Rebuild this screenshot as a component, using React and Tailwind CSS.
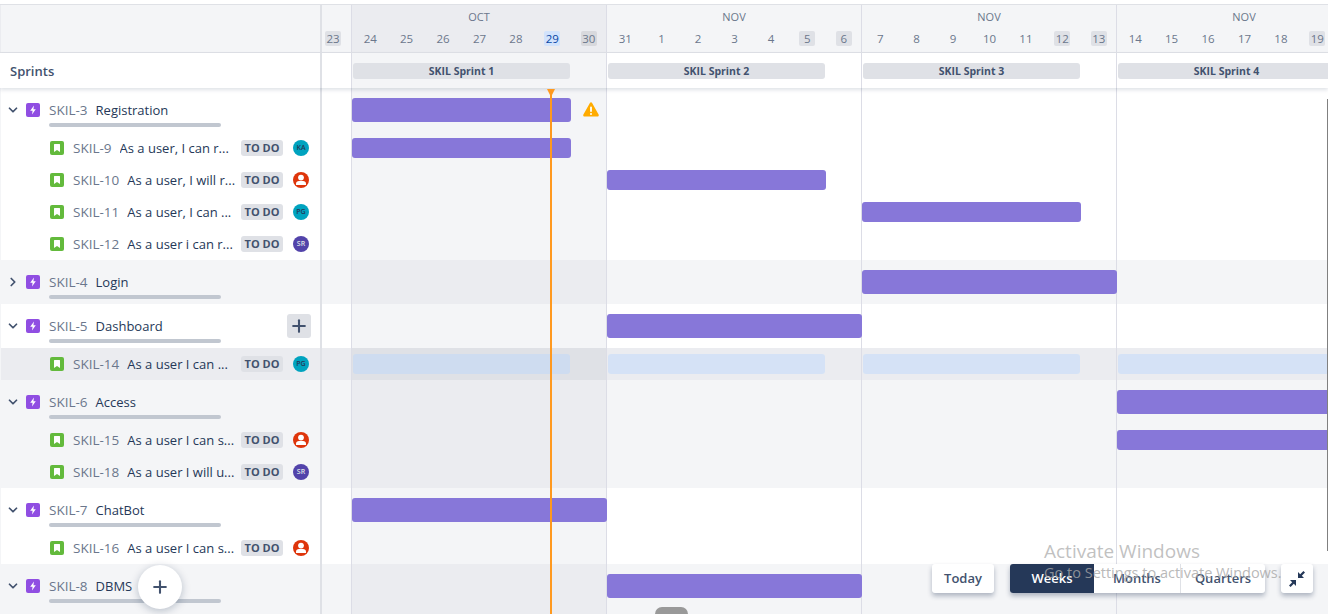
import React from 'react';
import { ChevronDown, ChevronRight, Plus } from 'lucide-react';

const fontClass = "font-['Open_Sans','Noto_Sans',sans-serif]";

const weeks = [
  { month: 'OCT', days: [24, 25, 26, 27, 28, 29, 30], sprint: 'SKIL Sprint 1', shaded: true },
  { month: 'NOV', days: [31, 1, 2, 3, 4, 5, 6], sprint: 'SKIL Sprint 2' },
  { month: 'NOV', days: [7, 8, 9, 10, 11, 12, 13], sprint: 'SKIL Sprint 3' },
  { month: 'NOV', days: [14, 15, 16, 17, 18, 19, 20], sprint: 'SKIL Sprint 4' },
];

const weekend = [23, 5, 6, 12, 13, 19, 20, 30];

const rows = [
  { kind: 'epic', id: 'SKIL-3', title: 'Registration', open: true, bar: { week: 0, short: true } },
  { kind: 'story', id: 'SKIL-9', title: 'As a user, I can r...', avatar: 'KA', bar: { week: 0, short: true } },
  { kind: 'story', id: 'SKIL-10', title: 'As a user, I will r...', avatar: 'user', bar: { week: 1, short: true } },
  { kind: 'story', id: 'SKIL-11', title: 'As a user, I can ...', avatar: 'PG', bar: { week: 2, short: true } },
  { kind: 'story', id: 'SKIL-12', title: 'As a user i can r...', avatar: 'SR' },
  { kind: 'epic', id: 'SKIL-4', title: 'Login', grey: true, bar: { week: 2 } },
  { kind: 'epic', id: 'SKIL-5', title: 'Dashboard', open: true, add: true, bar: { week: 1 } },
  { kind: 'story', id: 'SKIL-14', title: 'As a user I can ...', avatar: 'PG', selected: true },
  { kind: 'epic', id: 'SKIL-6', title: 'Access', open: true, grey: true, bar: { week: 3 } },
  { kind: 'story', id: 'SKIL-15', title: 'As a user I can s...', avatar: 'user', grey: true, bar: { week: 3 } },
  { kind: 'story', id: 'SKIL-18', title: 'As a user I will u...', avatar: 'SR', grey: true },
  { kind: 'epic', id: 'SKIL-7', title: 'ChatBot', open: true, bar: { week: 0 } },
  { kind: 'story', id: 'SKIL-16', title: 'As a user I can s...', avatar: 'user' },
  { kind: 'epic', id: 'SKIL-8', title: 'DBMS', open: true, grey: true, bar: { week: 1 } },
  { kind: 'filler', id: 'end', grey: true },
];

const rowHeight = { epic: 'h-11', story: 'h-8', filler: 'h-1.5' };

const EpicIcon = () => (
  <svg viewBox="0 0 14 14" className="w-3.5 h-3.5 shrink-0">
    <rect width="14" height="14" rx="2" fill="#904ee2" />
    <path d="M8 2.500 4.200 7.700h2.400l-.6 3.800 3.800-5.200H7.400z" fill="#fff" />
  </svg>
);

const StoryIcon = () => (
  <svg viewBox="0 0 14 14" className="w-3.5 h-3.5 shrink-0">
    <rect width="14" height="14" rx="2" fill="#63ba3c" />
    <path d="M4.500 3h5a.5.5 0 0 1 .5.5V11L7 8.900 4 11V3.500a.5.5 0 0 1 .5-.5z" fill="#fff" />
  </svg>
);

const Avatar = ({ who }) => {
  if (who === 'user') {
    return (
      <svg viewBox="0 0 16 16" className="w-4 h-4 shrink-0">
        <circle cx="8" cy="8" r="8" fill="#de350b" />
        <circle cx="8" cy="5.600" r="2.900" fill="#fff" />
        <path d="M3 13v-1.400C3 9.900 4.300 9 6 9h4c1.700 0 3 .9 3 2.600V13z" fill="#fff" />
      </svg>
    );
  }
  const bg = who === 'SR' ? 'bg-[#5243aa] text-[#dfe1e6]' : 'bg-[#00a3bf] text-[#253858]';
  return (
    <div className={`w-4 h-4 shrink-0 rounded-full flex items-center justify-center text-[7px] font-semibold ${bg}`}>
      {who}
    </div>
  );
};

const Epic = ({ row }) => (
  <div className="h-11 pt-3 pl-[5px] pr-[9px]">
    <div className="flex items-center h-5">
      <div className="w-5 shrink-0 text-[#42526e]">
        {row.open ? <ChevronDown size={14} strokeWidth={3} /> : <ChevronRight size={14} strokeWidth={3} />}
      </div>
      <EpicIcon />
      <span className="ml-[9px] mt-px text-[13.5px] text-[#6b778c]">{row.id}</span>
      <span className="ml-2 mt-0.5 text-[#253858]">{row.title}</span>
      {row.add && (
        <div className="ml-auto w-6 h-6 shrink-0 rounded-[3px] bg-[#dfe1e6] flex items-center justify-center text-[#42526e]">
          <Plus size={20} strokeWidth={2.5} />
        </div>
      )}
    </div>
    <div className="mt-[3px] ml-[43px] w-[172px] h-1 rounded-sm bg-[#c1c7d0]" />
  </div>
);

const Story = ({ row }) => (
  <div className="h-8 flex items-center pl-[49px] pr-[11px]">
    <StoryIcon />
    <span className="ml-[9px] mt-px text-[13.5px] text-[#6b778c] shrink-0">{row.id}</span>
    <span className="ml-2 mt-0.5 text-[#253858] whitespace-nowrap overflow-hidden flex-1">{row.title}</span>
    <span className="ml-0.5 w-[42px] h-4 shrink-0 rounded-[3px] bg-[#dfe1e6] text-[#42526e] text-[11px] font-bold leading-4 text-center">
      TO DO
    </span>
    <div className="ml-2.5">
      <Avatar who={row.avatar} />
    </div>
  </div>
);

const DayLabel = ({ day }) => {
  let badge = 'text-[#6b778c]';
  if (day === 29) badge = 'bg-[#d2e3fc] text-[#0747a6]';
  else if (day === 30) badge = 'bg-[#d8d9dd] text-[#6b778c]';
  else if (weekend.includes(day)) badge = 'bg-[#dfe1e6] text-[#6b778c]';
  return (
    <div className="flex justify-center">
      <span className={`w-4 h-[15px] rounded-[2px] text-[11.5px] leading-[15px] text-center ${badge}`}>{day}</span>
    </div>
  );
};

const TimelineRow = ({ row }) => {
  const base = row.selected ? 'bg-[#ebecf0]' : row.grey ? 'bg-[#f4f5f7]' : 'bg-white';
  const shaded = row.selected ? 'bg-[#dfe1e6]' : row.grey ? 'bg-[#ebecf0]' : 'bg-[#f4f5f7]';
  return (
    <div className={`flex flex-1 ${base}`}>
      <div className="w-[29px] shrink-0" />
      {weeks.map((w, i) => (
        <div
          key={i}
          className={`w-[255px] shrink-0 border-l border-[#dcdde6] flex items-center ${w.shaded ? shaded : ''}`}
        >
          {row.selected && <div className="ml-px w-[217px] h-5 rounded-[3px] bg-[#b3d4ff]/40 shrink-0" />}
          {row.bar && row.bar.week === i && (
            <div
              className={`relative rounded-[3px] bg-[#8777d9] shrink-0 ${row.bar.short ? 'w-[219px]' : 'w-[255px]'} ${row.kind === 'epic' ? 'h-6' : 'h-5'}`}
            />
          )}
        </div>
      ))}
    </div>
  );
};

export default function App() {
  return (
    <div className={`${fontClass} relative w-[1328px] h-[614px] overflow-hidden bg-white text-[13px] pt-1`}>
      {/* Header */}
      <div className="flex h-[49px] border-t border-b border-[#dfe1e6] bg-[#f4f5f7]">
        <div className="w-[320px] shrink-0 border-l border-[#ebecf0]" />
        <div className="w-0.5 shrink-0 bg-[#dfe1e6]" />
        <div className="w-[29px] shrink-0 pt-[26px] pr-[7px] flex justify-center">
          <DayLabel day={23} />
        </div>
        {weeks.map((w, i) => (
          <div key={i} className={`w-[255px] shrink-0 border-l border-[#dcdde6] ${w.shaded ? 'bg-[#ebecf0]' : ''}`}>
            <div className="h-[26px] pt-[4px] text-center text-[11px] leading-4 text-[#6b778c]">{w.month}</div>
            <div className="grid grid-cols-7 -mr-px">
              {w.days.map((d) => (
                <DayLabel key={d} day={d} />
              ))}
            </div>
          </div>
        ))}
      </div>

      {/* Sprints */}
      <div className="relative z-10 flex h-[35px] bg-white shadow-[0_2px_4px_rgba(9,30,66,0.13)]">
        <div className="w-[320px] shrink-0 flex items-center pl-2.5 pt-0.5 font-semibold text-[#42526e]">Sprints</div>
        <div className="w-0.5 shrink-0 bg-[#dfe1e6]" />
        <div className="w-[29px] shrink-0" />
        {weeks.map((w, i) => (
          <div
            key={i}
            className={`w-[255px] shrink-0 border-l border-[#dcdde6] flex items-center pl-px ${w.shaded ? 'bg-[#f4f5f7]' : ''}`}
          >
            <div className="w-[217px] h-4 rounded-[3px] bg-[#dfe1e6] text-[10.5px] font-bold leading-4 text-center text-[#42526e]">
              {w.sprint}
            </div>
          </div>
        ))}
      </div>

      {/* Rows */}
      {rows.map((row) => (
        <div key={row.id} className={`flex ${rowHeight[row.kind]}`}>
          <div
            className={`w-[320px] shrink-0 border-l border-[#f4f5f7] ${row.selected ? 'bg-[#ebecf0]' : row.grey ? 'bg-[#f4f5f7]' : 'bg-white'}`}
          >
            {row.kind === 'epic' && <Epic row={row} />}
            {row.kind === 'story' && <Story row={row} />}
          </div>
          <div className="w-0.5 shrink-0 bg-[#dfe1e6]" />
          <TimelineRow row={row} />
        </div>
      ))}

      {/* Today line */}
      <div className="absolute z-20 left-[550px] top-[89px] bottom-0 w-0.5 bg-[#ff991f]" />
      <div className="absolute z-20 left-[547px] top-[89px] w-0 h-0 border-x-4 border-t-[8px] border-x-transparent border-t-[#ff991f]" />

      {/* Warning */}
      <svg viewBox="0 0 16 15" className="absolute z-20 left-[583px] top-[102px] w-4 h-[15px]">
        <path d="M6.900 1 .4 12.600c-.5.9.1 2 1.100 2h13c1 0 1.600-1.100 1.100-2L9.100 1c-.5-.9-1.700-.9-2.200 0z" fill="#ffab00" />
        <rect x="7.100" y="4.500" width="1.800" height="5.500" rx=".9" fill="#fff" />
        <circle cx="8" cy="12" r="1" fill="#fff" />
      </svg>

      {/* Floating add */}
      <div className="absolute z-20 left-[138px] top-[565px] w-11 h-11 rounded-full bg-white shadow-[0_2px_8px_rgba(9,30,66,0.25)] flex items-center justify-center text-[#42526e]">
        <Plus size={20} strokeWidth={2.5} />
      </div>

      {/* Zoom controls */}
      <div className="absolute z-20 left-[932px] top-[564px] flex h-[29px] text-[13px] font-semibold text-[#42526e]">
        <div className="w-[62px] rounded-[3px] bg-white flex items-center justify-center shadow-[0_3px_5px_rgba(9,30,66,0.3)]">
          Today
        </div>
        <div className="ml-4 flex rounded-[3px] bg-white shadow-[0_3px_5px_rgba(9,30,66,0.3)]">
          <div className="w-[84px] rounded-l-[3px] bg-[#253858] text-white flex items-center justify-center">Weeks</div>
          <div className="w-[86px] flex items-center justify-center">Months</div>
          <div className="w-[85px] border-l border-[#dfe1e6] flex items-center justify-center">Quarters</div>
        </div>
        <div className="ml-4 w-8 rounded-[3px] bg-white flex items-center justify-center shadow-[0_3px_5px_rgba(9,30,66,0.3)]">
          <svg viewBox="0 0 18 18" className="w-[18px] h-[18px]" fill="#253858">
            <path d="M10 2v6h6l-2.200-2.200L17 2.600 15.400 1l-3.200 3.200z" />
            <path d="M8 16v-6H2l2.200 2.200L1 15.400 2.600 17l3.200-3.200z" />
          </svg>
        </div>
      </div>

      {/* Windows watermark */}
      <div className="absolute z-30 left-[1044px] top-[539px] text-[19px] leading-6 text-[#a6a6a6]/70 pointer-events-none whitespace-nowrap">
        Activate Windows
      </div>
      <div className="absolute z-30 left-[1044px] top-[564px] text-[14.5px] leading-[18px] text-[#a6a6a6]/80 pointer-events-none whitespace-nowrap">
        Go to Settings to activate Windows.
      </div>

      {/* Scroll handles */}
      <div className="absolute z-20 left-[655px] top-[607px] w-[33px] h-[7px] rounded-t-lg bg-[#999999]" />
      <div className="absolute z-20 right-0 top-[99px] h-[452px] w-px bg-[#808080]" />
    </div>
  );
}
